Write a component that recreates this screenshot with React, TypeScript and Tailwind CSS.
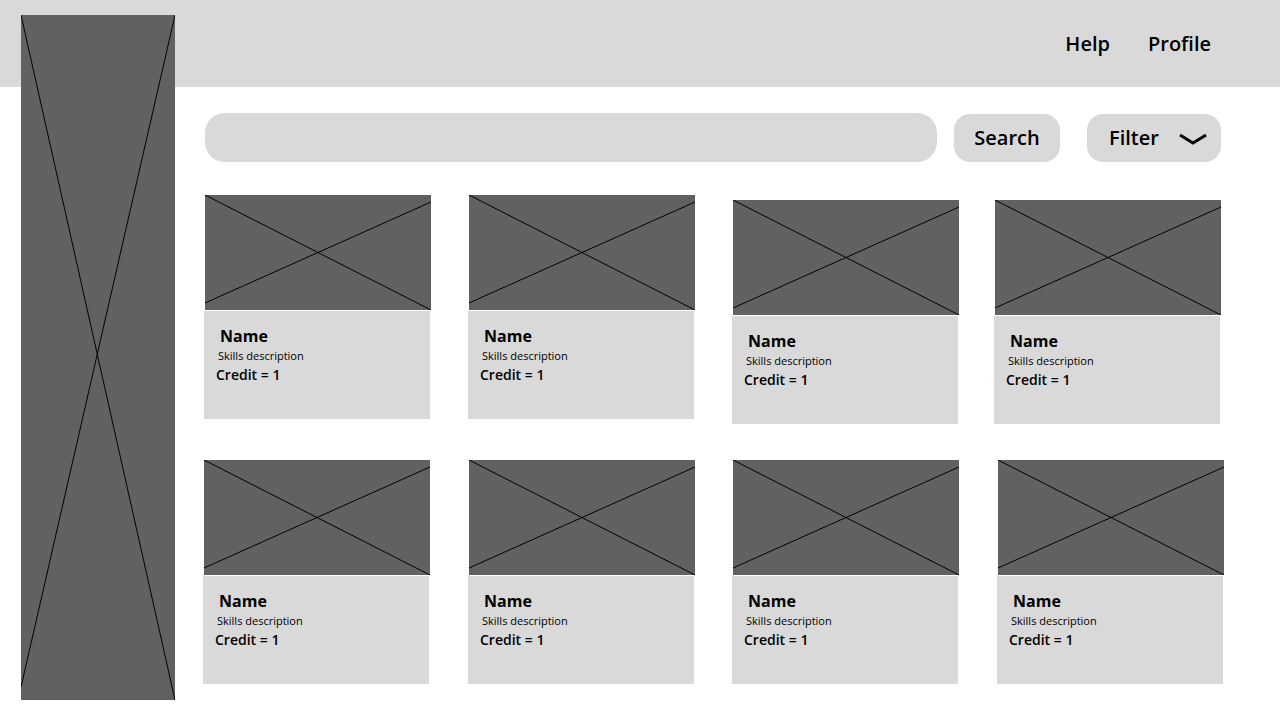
import React from "react";

const Cross = ({ w, h, y2a, y2b }: { w: number; h: number; y2a: number; y2b: number }) => (
  <svg width={w} height={h} viewBox={`0 0 ${w} ${h}`} className="block">
    <line x1="0" y1="0" x2={w} y2={h} stroke="#000" strokeWidth="1" />
    <line x1={w} y1={y2a} x2="0" y2={y2b} stroke="#000" strokeWidth="1" />
  </svg>
);

const Card = ({ cls }: { cls: string }) => (
  <div className={`flex flex-col ${cls}`}>
    <div className="w-[226px] h-[115px] bg-[#616161]">
      <Cross w={226} h={115} y2a={7} y2b={108} />
    </div>
    <div className="-ml-px mt-px w-[226px] h-[108px] bg-[#d9d9d9] text-black flex flex-col">
      <div className="pl-4 pt-[14px] text-[16px] leading-[22px] font-bold">Name</div>
      <div className="pl-[14px] mt-[2px] text-[11px] leading-[14px]">Skills description</div>
      <div className="pl-3 mt-[3px] text-[14px] leading-[18px] font-semibold">Credit = 1</div>
    </div>
  </div>
);

export default function App() {
  return (
    <div className="w-[1280px] h-[720px] bg-white overflow-hidden text-black" style={{ fontFamily: '"Open Sans", "Noto Sans", sans-serif' }}>
      <header className="h-[87px] bg-[#d9d9d9] flex items-center justify-end pr-[69px] gap-[38px] text-[20px] font-semibold">
        <span>Help</span>
        <span>Profile</span>
      </header>
      <div className="flex">
        <div className="ml-[21px] -mt-[72px] w-[154px] h-[685px] bg-[#616161] relative z-10">
          <Cross w={154} h={685} y2a={0} y2b={672} />
        </div>
        <main className="pl-[30px] pt-[26px] flex flex-col">
          <div className="flex items-center">
            <div className="w-[732px] h-[49px] rounded-[20px] bg-[#d9d9d9]" />
            <button className="ml-[17px] w-[106px] h-[48px] rounded-2xl bg-[#d9d9d9] text-[20px] font-semibold flex items-center justify-center">
              Search
            </button>
            <button className="ml-[27px] w-[134px] h-[48px] rounded-2xl bg-[#d9d9d9] text-[20px] font-semibold flex items-center pl-[22px]">
              <span>Filter</span>
              <svg width="30" height="14" viewBox="0 0 30 14" className="ml-[19px] mt-[2px]">
                <polyline points="2,3 15,11 28,3" fill="none" stroke="#000" strokeWidth="3" />
              </svg>
            </button>
          </div>
          <div className="mt-[33px] flex items-start">
            <Card cls="" />
            <Card cls="ml-[38px]" />
            <Card cls="ml-[38px] mt-[5px]" />
            <Card cls="ml-[36px] mt-[5px]" />
          </div>
          <div className="mt-[36px] flex items-start">
            <Card cls="-ml-px" />
            <Card cls="ml-[39px]" />
            <Card cls="ml-[38px]" />
            <Card cls="ml-[39px]" />
          </div>
        </main>
      </div>
    </div>
  );
}
